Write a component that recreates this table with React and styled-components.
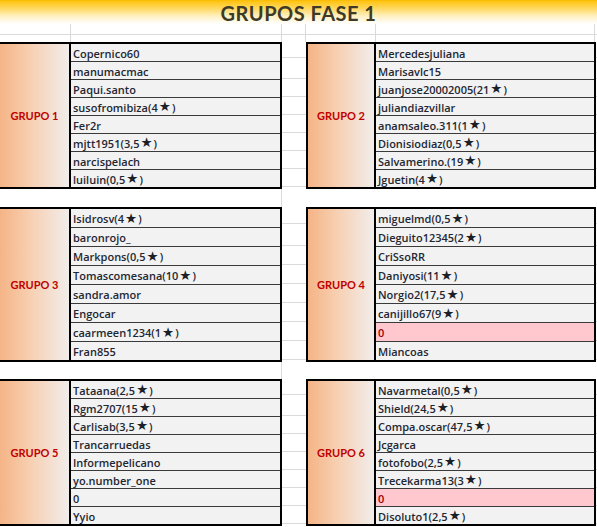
import React from 'react';
import styled, { createGlobalStyle } from 'styled-components';

const groups = [
    {
        left: { name: 'GRUPO 1', players: ['Copernico60', 'manumacmac', 'Paqui.santo', 'susofromibiza(4★)', 'Fer2r', 'mjtt1951(3,5★)', 'narcispelach', 'luiluin(0,5★)'] },
        right: { name: 'GRUPO 2', players: ['Mercedesjuliana', 'Marisavlc15', 'juanjose20002005(21★)', 'juliandiazvillar', 'anamsaleo.311(1★)', 'Dionisiodiaz(0,5★)', 'Salvamerino.(19★)', 'Jguetin(4★)'] },
        rowH: 17
    },
    {
        left: { name: 'GRUPO 3', players: ['Isidrosv(4★)', 'baronrojo_', 'Markpons(0,5★)', 'Tomascomesana(10★)', 'sandra.amor', 'Engocar', 'caarmeen1234(1★)', 'Fran855'] },
        right: { name: 'GRUPO 4', players: ['miguelmd(0,5★)', 'Dieguito12345(2★)', 'CriSsoRR', 'Daniyosi(11★)', 'Norgio2(17,5★)', 'canijillo67(9★)', { text: '0', bad: true }, 'Miancoas'] },
        rowH: 18
    },
    {
        left: { name: 'GRUPO 5', players: ['Tataana(2,5★)', 'Rgm2707(15★)', 'Carlisab(3,5★)', 'Trancarruedas', 'Informepelicano', 'yo.number_one', '0', 'Yyio'] },
        right: { name: 'GRUPO 6', players: ['Navarmetal(0,5★)', 'Shield(24,5★)', 'Compa.oscar(47,5★)', 'Jcgarca', 'fotofobo(2,5★)', 'Trecekarma13(3★)', { text: '0', bad: true }, 'Disoluto1(2,5★)'] },
        rowH: 17
    }
];

const gapHeights = [18, 17];

const GlobalStyle = createGlobalStyle`
    body {
        margin: 0;
        background: #fff;
        font-family: "Lato", "DejaVu Sans", sans-serif;
    }
`;

const Sheet = styled.div`
    width: 597px;
    display: flex;
    flex-direction: column;
`;

const TitleBar = styled.div`
    height: 24px;
    display: flex;
    align-items: center;
    justify-content: center;
    background: linear-gradient(to bottom, #f6b700 0px, #ffc310 1px, #ffd75a 8px, #fff0c0 16px, #ffffff 24px);
    color: #3d3a28;
    font-weight: 700;
    font-size: 20px;
    letter-spacing: 0.5px;
    padding-top: 1px;
    box-sizing: border-box;
`;

const GridRow = styled.div`
    display: flex;
    height: ${p => p.h}px;
    box-sizing: border-box;
    border-bottom: ${p => (p.line ? '1px solid #dadada' : 'none')};
`;

const GridCell = styled.div`
    width: ${p => p.w}px;
    flex: none;
    box-sizing: border-box;
    border-right: ${p => (p.last ? 'none' : '1px solid #dadada')};
`;

const Band = styled.div`
    display: flex;
`;

const Table = styled.div`
    width: ${p => p.w}px;
    flex: none;
    display: flex;
    box-sizing: border-box;
    border: 2px solid #000;
    border-left: ${p => (p.open ? 'none' : '2px solid #000')};
`;

const Label = styled.div`
    width: ${p => p.w}px;
    flex: none;
    display: flex;
    align-items: center;
    justify-content: center;
    background: linear-gradient(to right, #f5b486, #f7d0b3 45%, #f1edea);
    border-right: 2px solid #000;
    color: #c00000;
    font-size: 11px;
    font-weight: 700;
`;

const Names = styled.div`
    flex: 1;
    display: flex;
    flex-direction: column;
    background: #f2f2f2;
`;

const Name = styled.div`
    height: ${p => p.h}px;
    flex: none;
    display: flex;
    align-items: center;
    padding-left: 2px;
    padding-top: 1px;
    box-sizing: content-box;
    border-top: ${p => (p.first ? 'none' : '1px solid #3a3a3a')};
    background: ${p => (p.bad ? '#ffc7ce' : 'transparent')};
    color: ${p => (p.bad ? '#9c0006' : '#1f2733')};
    font-family: "Open Sans", "DejaVu Sans", sans-serif;
    font-size: 11px;
    font-weight: 600;
    white-space: nowrap;
    line-height: 1;
`;

const Star = styled.span`
    font-family: "DejaVu Sans", sans-serif;
    font-size: 13.5px;
    line-height: 1;
    margin: 0 1px;
    color: #1a1f28;
`;

const Filler = styled.div`
    width: ${p => p.w}px;
    flex: none;
    background-image: repeating-linear-gradient(
        to bottom,
        transparent 0px,
        transparent ${p => p.pitch - 1}px,
        #dadada ${p => p.pitch - 1}px,
        #dadada ${p => p.pitch}px
    );
    background-position: 0 ${p => p.pitch + 1}px;
`;

const GapRow = styled.div`
    height: ${p => p.h}px;
    display: flex;
`;

const GapLeft = styled.div`
    width: 282px;
    box-sizing: border-box;
    border-right: 1px solid #dadada;
`;

// split the star out so it gets its own glyph width
function withStars(text) {
    const parts = text.split('★');
    return parts.map((part, i) => (
        <React.Fragment key={i}>
            {part}
            {i < parts.length - 1 && <Star>★</Star>}
        </React.Fragment>
    ));
}

function Group({ group, open, width, labelW, rowH }) {
    return (
        <Table w={width} open={open}>
            <Label w={labelW}>{group.name}</Label>
            <Names>
                {group.players.map((p, i) => {
                    const item = typeof p === 'string' ? { text: p } : p;
                    return (
                        <Name key={i} first={i === 0} bad={item.bad} h={rowH - 1}>
                            {withStars(item.text)}
                        </Name>
                    );
                })}
            </Names>
        </Table>
    );
}

export default function App() {
    return (
        <Sheet>
            <GlobalStyle />
            <TitleBar>GRUPOS FASE 1</TitleBar>
            <GridRow h={11} line>
                <GridCell w={71} />
                <GridCell w={211} />
                <GridCell w={24} />
                <GridCell w={70} />
                <GridCell w={219} />
                <GridCell w={2} last />
            </GridRow>
            <GridRow h={7}>
                <GridCell w={71} />
                <GridCell w={211} />
                <GridCell w={24} />
                <GridCell w={70} />
                <GridCell w={219} />
                <GridCell w={2} last />
            </GridRow>
            {groups.map((band, i) => (
                <React.Fragment key={i}>
                    <Band>
                        <Group group={band.left} open width={282} labelW={69} rowH={band.rowH} />
                        <Filler w={24} pitch={band.rowH + 1} />
                        <Group group={band.right} width={290} labelW={66} rowH={band.rowH} />
                        <Filler w={1} pitch={band.rowH + 1} />
                    </Band>
                    {i < gapHeights.length && (
                        <GapRow h={gapHeights[i]}>
                            <GapLeft />
                        </GapRow>
                    )}
                </React.Fragment>
            ))}
        </Sheet>
    );
}
